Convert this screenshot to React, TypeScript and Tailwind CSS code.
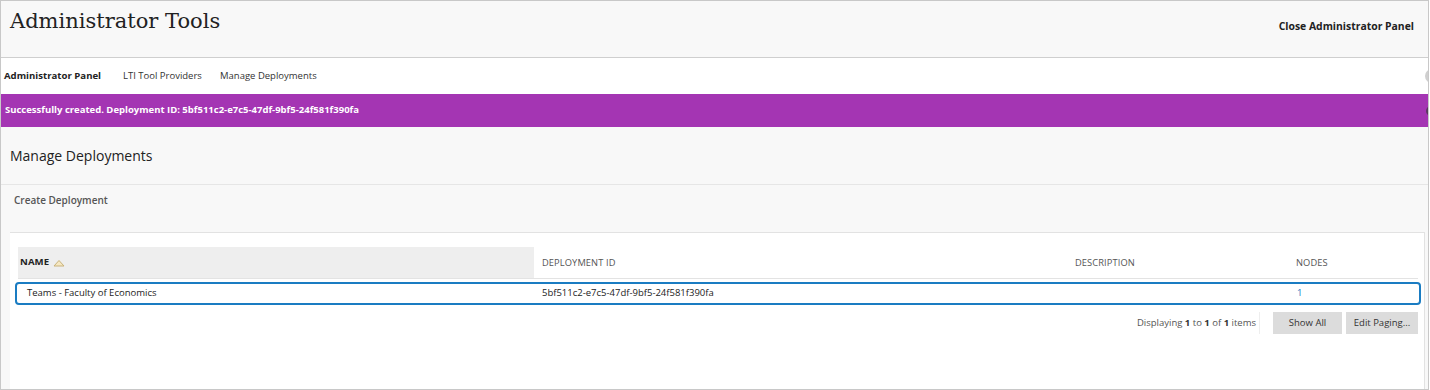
import React from "react";

const sans = { fontFamily: '"Open Sans", "Noto Sans", sans-serif' };

function TableHeader() {
  return (
    <div className="grid h-[32px] grid-cols-[516px_533px_221px_1fr] items-center border-b border-[#e3e3e3] text-[9.3px] text-[#555] tracking-[0.1px]">
      <div className="flex h-full items-center gap-[4px] bg-[#eeeeee] pl-[2px] text-[9.6px] font-bold text-[#222]">
        NAME
        <svg width="12" height="8" viewBox="0 0 12 8">
          <path d="M1 7 L6 1.5 L11 7 Z" fill="#f6e8c2" stroke="#c9b27a" strokeWidth="1" />
        </svg>
      </div>
      <div className="pl-[8px]">DEPLOYMENT ID</div>
      <div className="pl-[8px]">DESCRIPTION</div>
      <div className="pl-[8px]">NODES</div>
    </div>
  );
}

function DeploymentRow() {
  return (
    <div className="-mx-[3px] mt-[3px] grid h-[23px] grid-cols-[519px_533px_221px_1fr] items-center rounded-[4px] border-2 border-[#1a7cc2] text-[9.5px] text-[#222]">
      <div className="pl-[10px]">Teams - Faculty of Economics</div>
      <div className="pl-[6px]">5bf511c2-e7c5-47df-9bf5-24f581f390fa</div>
      <div />
      <div className="pl-[7px] text-[#1a7cc2]">1</div>
    </div>
  );
}

export default function App() {
  return (
    <div className="h-[390px] w-[1430px] overflow-hidden bg-white" style={sans}>
      <div className="flex h-[390px] w-[1429px] flex-col border border-[#c8c8c8] bg-[#f8f8f8]">
        <header className="flex h-[57px] shrink-0 items-start justify-between border-b border-[#cfcfcf] bg-[#f8f8f8]">
          <h1
            className="mt-[5px] ml-[9px] text-[21px] text-[#222]"
            style={{ fontFamily: '"DejaVu Serif", "Liberation Serif", serif' }}
          >
            Administrator Tools
          </h1>
          <button className="mt-[18px] mr-[14px] text-[10.4px] font-bold text-[#222]">
            Close Administrator Panel
          </button>
        </header>

        <nav className="flex h-[36px] shrink-0 items-center overflow-hidden bg-white text-[9.5px] text-[#333]">
          <span className="ml-[3px] w-[119px] text-[9.6px] font-bold text-[#222]">Administrator Panel</span>
          <span className="w-[97px]">LTI Tool Providers</span>
          <span>Manage Deployments</span>
          <span className="-mr-[11px] ml-auto h-[14px] w-[14px] rounded-full bg-[#cfcfcf]" />
        </nav>

        <div className="flex h-[33px] shrink-0 items-center overflow-hidden bg-[#a435b3] text-[9.5px] font-bold text-white">
          <span className="ml-[4px]">
            Successfully created. Deployment ID: 5bf511c2-e7c5-47df-9bf5-24f581f390fa
          </span>
          <span className="-mr-[8px] ml-auto h-[10px] w-[10px] rounded-full bg-[#5a3a60]" />
        </div>

        <div className="flex h-[58px] shrink-0 items-center border-b border-[#e6e6e6] pl-[9px] text-[14px] text-[#222]">
          Manage Deployments
        </div>

        <div className="flex h-[31px] shrink-0 items-center pl-[13px] text-[10px] font-semibold text-[#555]">
          Create Deployment
        </div>

        <div className="mt-[16px] ml-[9px] mr-[3px] flex-1 border-t border-r border-[#e2e2e2] bg-white pl-[8px] pr-[6px] pt-[14px]">
          <TableHeader />
          <DeploymentRow />
          <div className="mt-[7px] flex items-center justify-end gap-[4px] text-[9.5px] text-[#555]">
            <span className="mr-[9px] border-r border-[#eeeeee] pr-[3px] leading-[22px]">
              Displaying <b className="text-[#333]">1</b> to <b className="text-[#333]">1</b> of{" "}
              <b className="text-[#333]">1</b> items
            </span>
            <button className="h-[22px] w-[69px] bg-[#dcdcdc] text-[#333]">Show All</button>
            <button className="h-[22px] w-[72px] bg-[#dcdcdc] text-[#333]">Edit Paging...</button>
          </div>
        </div>
      </div>
    </div>
  );
}
